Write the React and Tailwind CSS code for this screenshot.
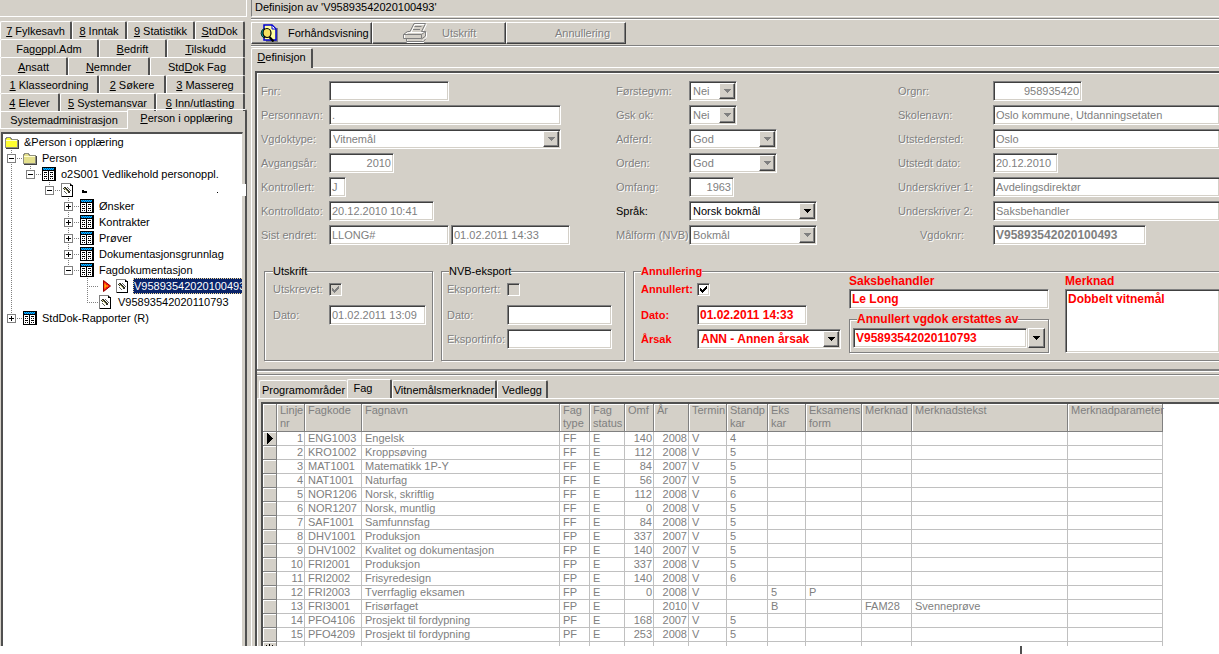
import { useId } from "react";

const SUNKEN =
  "border border-t-[#808080] border-l-[#808080] border-r-white border-b-white shadow-[inset_1px_1px_0_#404040,inset_-1px_-1px_0_#d4d0c8]";
const RAISED =
  "border border-t-white border-l-white border-r-[#404040] border-b-[#404040] shadow-[inset_-1px_-1px_0_#808080]";
const ETCHED = "border border-[#808080] shadow-[1px_1px_0_#fff,inset_1px_1px_0_#fff]";
const DIM = "text-[#808080] [text-shadow:1px_1px_0_#fff]";
const RED = "text-[#ff0000] font-bold text-[12px]";
const RED_SMALL = "text-[#ff0000] font-bold text-[11px]";

function Hot({ text }) {
  const [before, key, after] = text.split("|");
  if (key === undefined) return text;
  return (
    <span className="whitespace-pre">
      {before}
      <span className="underline underline-offset-1">{key}</span>
      {after}
    </span>
  );
}

/* ---------- left side ---------- */

function NavTab({ text, width }) {
  return (
    <button
      type="button"
      className={`h-[18px] rounded-t-xs border-t border-l border-r-2 border-t-white border-l-white border-r-[#505050] text-center leading-4 whitespace-nowrap ${width}`}
    >
      <Hot text={text} />
    </button>
  );
}

const NAV_ROWS = [
  [["|7| Fylkesavh", "w-[72px]"], ["|8| Inntak", "w-[55px]"], ["|9| Statistikk", "w-[68px]"], ["|S|tdDok", "flex-1"]],
  [["Fag|o|ppl.Adm", "w-[99px]"], ["|B|edrift", "w-[68px]"], ["|T|ilskudd", "flex-1"]],
  [["|A|nsatt", "w-[68px]"], ["|N|emnder", "w-[82px]"], ["Std|D|ok Fag", "flex-1"]],
  [["|1| Klasseordning", "w-[99px]"], ["|2| Søkere", "w-[67px]"], ["|3| Massereg", "flex-1"]],
  [["|4| Elever", "w-[60px]"], ["|5| Systemansvar", "w-[96px]"], ["|6| Inn/utlasting", "flex-1"]],
];

function FolderIcon({ open }) {
  return (
    <svg width="16" height="16" viewBox="0 0 16 16" shapeRendering="crispEdges" className="shrink-0">
      <path d="M1 14V4H2V3H7V4H8V5H14V14Z" fill="#909080" />
      <path d="M2 13V5H3V4H6V5H7V6H13V13Z" fill={open ? "#ffff30" : "#e4e08c"} />
      <path d="M2 6.500H13" stroke="#ffffd0" />
      <path d="M2 14.500H15" stroke="#404040" />
      <path d="M14.500 6V14" stroke="#404040" />
    </svg>
  );
}

function FormIcon() {
  return (
    <svg width="16" height="16" viewBox="0 0 16 16" shapeRendering="crispEdges" className="shrink-0">
      <rect x="1" y="1" width="14" height="14" fill="#000" />
      <rect x="2" y="5" width="5" height="9" fill="#fff" />
      <rect x="8" y="5" width="5" height="9" fill="#fff" />
      <rect x="2" y="2" width="11" height="2" fill="#0050c0" />
      <path d="M2 2.500H13" stroke="#00d0ff" strokeDasharray="1 1" />
      <path d="M3 3.500H13" stroke="#00d0ff" strokeDasharray="1 1" />
      <path d="M3 6.500H6M3 8.500H4M5 8.500H6M3 10.500H6M3 12.500H4M5 12.500H6M9 6.500H12M9 8.500H10M11 8.500H12M9 10.500H12M9 12.500H10M11 12.500H12" stroke="#000" />
    </svg>
  );
}

function DocIcon() {
  return (
    <svg width="16" height="16" viewBox="0 0 16 16" shapeRendering="crispEdges" className="shrink-0">
      <path d="M1.500 1.500H10.500L12.500 3.500V14.500H1.500Z" fill="#fff" stroke="#808080" />
      <path d="M10.500 1.500V3.500H12.500V14.500H1.500" fill="none" stroke="#000" />
      <path d="M3 6H4V5H6V6H7V7H8V8H9V9H10V11H8V10H7V9H6V8H4V7H3Z" fill="#303028" />
      <path d="M4 6.500H5M5 7.500H6M6 8.500H7M7 9.500H8" stroke="#d8d890" />
      <path d="M7 5.500H8M8 6.500H9M9 7.500H10M10 8.500H11M4 9.500H5M5 10.500H6M6 11.500H7" stroke="#606060" />
    </svg>
  );
}

function ArrowIcon() {
  return (
    <svg width="12" height="16" viewBox="0 0 12 16" className="mr-px ml-1 shrink-0">
      <path d="M1.500 2.500V13.500L8.500 8Z" fill="#ff1010" stroke="#900000" />
      <path d="M3 5.500V8H6M3 10.500V8" fill="none" stroke="#ffe000" />
    </svg>
  );
}

/* Guide cells: l = trunk line, b = blank, t = tee, c = corner */
function Guide({ kind, box }) {
  return (
    <svg width="19" height="16" viewBox="0 0 19 16" shapeRendering="crispEdges" className="shrink-0">
      {kind !== "b" && (
        <path d={kind === "c" ? "M8.500 0V8" : "M8.500 0V16"} stroke="#808080" strokeDasharray="1 1" />
      )}
      {(kind === "t" || kind === "c") && <path d="M8 8.500H19" stroke="#808080" strokeDasharray="1 1" />}
      {box && (
        <>
          <rect x="4.500" y="4.500" width="8" height="8" fill="#fff" stroke="#808080" />
          <path d={box === "+" ? "M6 8.500H11M8.500 6V11" : "M6 8.500H11"} stroke="#000" />
        </>
      )}
    </svg>
  );
}

const TREE = [
  { guides: "t", box: "-", icon: "folder", text: "Person" },
  { guides: "lc", box: "-", icon: "form", text: "o2S001 Vedlikehold personoppl." },
  { guides: "lbc", box: "-", icon: "doc", masked: true },
  { guides: "lbbt", box: "+", icon: "form", text: "Ønsker" },
  { guides: "lbbt", box: "+", icon: "form", text: "Kontrakter" },
  { guides: "lbbt", box: "+", icon: "form", text: "Prøver" },
  { guides: "lbbt", box: "+", icon: "form", text: "Dokumentasjonsgrunnlag" },
  { guides: "lbbc", box: "-", icon: "form", text: "Fagdokumentasjon" },
  { guides: "lbbbt", icon: "doc", text: "V95893542020100493", selected: true },
  { guides: "lbbbc", icon: "doc", text: "V95893542020110793" },
  { guides: "c", box: "+", icon: "form", text: "StdDok-Rapporter (R)" },
];

function TreeRow({ node }) {
  const cells = node.guides.split("");
  return (
    <li className={`relative flex h-4 items-center ${node.masked ? "" : "overflow-hidden"}`}>
      {cells.map((kind, i) => (
        <Guide key={i} kind={kind} box={i === cells.length - 1 ? node.box : null} />
      ))}
      {node.selected && <ArrowIcon />}
      {node.icon === "folder" && <FolderIcon />}
      {node.icon === "form" && <FormIcon />}
      {node.icon === "doc" && <DocIcon />}
      {node.masked ? (
        <>
          <svg width="140" height="16" viewBox="0 0 140 16" shapeRendering="crispEdges" className="ml-1">
            <path d="M2 8H4V9H7V11H2Z" fill="#000" />
            <path d="M137 10H138V11H137Z" fill="#000" />
          </svg>
          <span className="absolute -right-1 h-3 w-2 bg-white" />
        </>
      ) : node.selected ? (
        <span className="ml-0.5 bg-[#0a246a] px-px leading-4 whitespace-nowrap text-white outline-1 -outline-offset-1 outline-dotted outline-[#f5db95]">
          {node.text}
        </span>
      ) : (
        <span className="ml-1 leading-4 whitespace-nowrap">{node.text}</span>
      )}
    </li>
  );
}

function Sidebar() {
  return (
    <aside className="flex w-[247px] shrink-0 flex-col">
      <div className="h-[17px] shrink-0 border-r border-b border-white" />
      <nav className="mt-1 shrink-0">
        {NAV_ROWS.map((row, i) => (
          <div key={i} className="mr-0.5 flex">
            {row.map(([text, width]) => (
              <NavTab key={text} text={text} width={width} />
            ))}
          </div>
        ))}
        <div className="flex h-[18px] items-end">
          <button type="button" className="h-[18px] w-[127px] border-t border-b border-l border-white text-center leading-4">
            Systemadministrasjon
          </button>
          <button
            type="button"
            className="h-5 flex-1 rounded-t-xs border-t border-r-2 border-l border-t-white border-r-[#505050] border-l-white pb-1 text-center leading-4"
          >
            <Hot text="|P|erson i opplæring" />
          </button>
        </div>
      </nav>
      <div className="flex min-h-0 flex-1 border-r-2 border-[#505050] pt-[3px] pr-0.5 pl-px">
        <ul className="min-w-0 flex-1 border-t-2 border-r border-l-2 border-t-[#505050] border-r-[#d4d0c8] border-l-[#505050] bg-white">
          <li className="flex h-4 items-center pl-px">
            <FolderIcon open />
            <span className="ml-1 leading-4">&amp;Person i opplæring</span>
          </li>
          {TREE.map((node, i) => (
            <TreeRow key={i} node={node} />
          ))}
        </ul>
      </div>
    </aside>
  );
}

/* ---------- form parts ---------- */

function Text({ id, value = "", width, tone = "text-[#808080]", right, open }) {
  return (
    <input
      id={id}
      type="text"
      defaultValue={value}
      className={`h-5 min-w-0 bg-white px-0.5 leading-4 outline-none ${SUNKEN} ${width} ${tone} ${right ? "text-right" : ""} ${open ? "border-r-0" : ""}`}
    />
  );
}

function Select({ id, value, width, tone = "text-[#808080]", dim = true }) {
  return (
    <span className={`relative flex h-5 bg-white p-0.5 ${SUNKEN} ${width}`}>
      <select id={id} className={`w-full appearance-none pl-px leading-[14px] outline-none ${tone}`}>
        <option>{value}</option>
      </select>
      <span className={`pointer-events-none absolute top-px right-px flex h-4 w-4 items-center justify-center bg-[#d4d0c8] ${RAISED}`}>
        <svg width="7" height="4" viewBox="0 0 7 4" shapeRendering="crispEdges">
          <path d="M0 0H7L3.500 4Z" fill={dim ? "#808080" : "#000"} />
        </svg>
      </span>
    </span>
  );
}

function Check({ id, checked, active }) {
  return (
    <span className="relative flex h-[13px] w-[13px]">
      <input
        id={id}
        type="checkbox"
        defaultChecked={checked}
        className={`h-[13px] w-[13px] appearance-none ${SUNKEN} ${active ? "bg-white" : "bg-[#d4d0c8]"}`}
      />
      {checked && (
        <svg width="13" height="13" viewBox="0 0 13 13" shapeRendering="crispEdges" className="pointer-events-none absolute inset-0">
          <path
            d="M3 5H4V6H5V7H6V6H7V5H8V4H9V3H10V6H9V7H8V8H7V9H6V10H5V9H4V8H3Z"
            fill={active ? "#000" : "#808080"}
          />
        </svg>
      )}
    </span>
  );
}

function Field({ label, labelWidth, labelClass = DIM, kind = "text", extra, ...rest }) {
  const id = useId();
  const Part = kind === "select" ? Select : Text;
  return (
    <div className="flex h-5 items-center">
      <label htmlFor={id} className={`shrink-0 leading-4 whitespace-nowrap ${labelWidth} ${labelClass}`}>
        {label}
      </label>
      <Part id={id} {...rest} />
      {extra}
    </div>
  );
}

function CheckField({ label, labelWidth, labelClass = DIM, checked, active }) {
  const id = useId();
  return (
    <div className="flex h-6 items-center">
      <label htmlFor={id} className={`shrink-0 leading-4 whitespace-nowrap ${labelWidth} ${labelClass}`}>
        {label}
      </label>
      <Check id={id} checked={checked} active={active} />
    </div>
  );
}

function FieldColumns() {
  const a = "w-[68px]";
  const b = "w-[73px]";
  const c = "w-[95px]";
  return (
    <div className="grid grid-cols-[355px_282px_minmax(0,1fr)] pt-2 pl-1">
      <div className="flex flex-col gap-1">
        <Field label="Fnr:" labelWidth={a} width="w-[120px]" />
        <Field label="Personnavn:" labelWidth={a} width="w-[232px]" value="." />
        <Field label="Vgdoktype:" labelWidth={a} width="w-[232px]" value="Vitnemål" kind="select" />
        <Field label="Avgangsår:" labelWidth={a} width="w-[65px]" value="2010" right />
        <Field label="Kontrollert:" labelWidth={a} width="w-[17px]" value="J" />
        <Field label="Kontrolldato:" labelWidth={a} width="w-[105px]" value="20.12.2010 10:41" />
        <Field
          label="Sist endret:"
          labelWidth={a}
          width="w-[120px]"
          value="LLONG#"
          extra={
            <input
              type="text"
              aria-label="Tidspunkt"
              defaultValue="01.02.2011 14:33"
              className={`ml-0.5 h-5 w-[119px] bg-white px-0.5 leading-4 text-[#808080] outline-none ${SUNKEN}`}
            />
          }
        />
      </div>
      <div className="flex flex-col gap-1">
        <Field label="Førstegvm:" labelWidth={b} width="w-12" value="Nei" kind="select" />
        <Field label="Gsk ok:" labelWidth={b} width="w-12" value="Nei" kind="select" />
        <Field label="Adferd:" labelWidth={b} width="w-[88px]" value="God" kind="select" />
        <Field label="Orden:" labelWidth={b} width="w-[88px]" value="God" kind="select" />
        <Field label="Omfang:" labelWidth={b} width="w-[45px]" value="1963" right />
        <Field
          label="Språk:"
          labelWidth={b}
          labelClass="text-black"
          width="w-32"
          value="Norsk bokmål"
          kind="select"
          tone="text-black"
          dim={false}
        />
        <Field label="Målform (NVB):" labelWidth={b} width="w-32" value="Bokmål" kind="select" />
      </div>
      <div className="flex flex-col gap-1">
        <Field label="Orgnr:" labelWidth={c} width="w-[89px]" value="958935420" right />
        <Field label="Skolenavn:" labelWidth={c} width="flex-1" value="Oslo kommune, Utdanningsetaten" open />
        <Field label="Utstedersted:" labelWidth={c} width="flex-1" value="Oslo" open />
        <Field label="Utstedt dato:" labelWidth={c} width="w-[65px]" value="20.12.2010" />
        <Field label="Underskriver 1:" labelWidth={c} width="flex-1" value="Avdelingsdirektør" open />
        <Field label="Underskriver 2:" labelWidth={c} width="flex-1" value="Saksbehandler" open />
        <Field
          label="Vgdoknr:"
          labelWidth="w-[95px] pl-[22px]"
          width="w-[153px]"
          value="V95893542020100493"
          tone="text-[#808080] font-bold text-[12px]"
        />
      </div>
    </div>
  );
}

function Groups() {
  const officer = useId();
  const note = useId();
  return (
    <div className="mt-5 flex gap-2 pl-[7px]">
      <fieldset className={`flex h-24 w-[169px] shrink-0 flex-col pl-2 ${ETCHED}`}>
        <legend className="h-3 bg-[#d4d0c8] leading-3">Utskrift</legend>
        <CheckField label="Utskrevet:" labelWidth="w-14" checked />
        <div className="mt-1">
          <Field label="Dato:" labelWidth="w-14" width="w-[97px]" value="01.02.2011 13:09" />
        </div>
      </fieldset>
      <fieldset className={`flex h-24 w-[184px] shrink-0 flex-col pl-[5px] ${ETCHED}`}>
        <legend className="ml-0.5 h-3 bg-[#d4d0c8] leading-3">NVB-eksport</legend>
        <CheckField label="Eksportert:" labelWidth="w-[60px]" />
        <div className="mt-1 flex flex-col gap-1">
          <Field label="Dato:" labelWidth="w-[60px]" width="w-[105px]" />
          <Field label="Eksportinfo:" labelWidth="w-[60px]" width="w-[105px]" />
        </div>
      </fieldset>
      <fieldset className={`h-24 min-w-0 flex-1 border-r-0 pl-[7px] ${ETCHED}`}>
        <legend className={`h-3 bg-[#d4d0c8] leading-3 ${RED_SMALL}`}>Annullering</legend>
        <div className="flex">
          <div className="w-[200px] shrink-0">
            <CheckField label="Annullert:" labelWidth="w-14" labelClass={RED_SMALL} checked active />
            <div className="mt-1 flex flex-col gap-1">
              <Field label="Dato:" labelWidth="w-14" labelClass={RED_SMALL} width="w-[110px]" value="01.02.2011 14:33" tone={RED} />
              <Field
                label="Årsak"
                labelWidth="w-14"
                labelClass={RED_SMALL}
                width="w-36"
                value="ANN - Annen årsak"
                kind="select"
                tone={RED}
                dim={false}
              />
            </div>
          </div>
          <div className="-mt-0.5 ml-2 flex w-[200px] shrink-0 flex-col">
            <label htmlFor={officer} className={`h-[14px] leading-3 ${RED}`}>
              Saksbehandler
            </label>
            <Text id={officer} value="Le Long" width="w-full" tone={RED} />
            <fieldset className={`mt-1 h-10 px-[3px] ${ETCHED}`}>
              <legend className={`ml-1 h-3 bg-[#d4d0c8] leading-3 whitespace-nowrap ${RED}`}>Annullert vgdok erstattes av</legend>
              <div className="mt-[3px] flex">
                <span className="relative flex h-5 w-full">
                  <select
                    aria-label="Annullert vgdok erstattes av"
                    className={`mr-[18px] h-5 w-full appearance-none bg-white pl-0.5 leading-4 outline-none ${SUNKEN} ${RED}`}
                  >
                    <option>V95893542020110793</option>
                  </select>
                  <span className={`pointer-events-none absolute right-0 flex h-5 w-[17px] items-center justify-center bg-[#d4d0c8] ${RAISED}`}>
                    <svg width="7" height="4" viewBox="0 0 7 4" shapeRendering="crispEdges">
                      <path d="M0 0H7L3.500 4Z" fill="#000" />
                    </svg>
                  </span>
                </span>
              </div>
            </fieldset>
          </div>
          <div className="-mt-0.5 ml-4 flex min-w-0 flex-1 flex-col">
            <label htmlFor={note} className={`h-[14px] leading-3 ${RED}`}>
              Merknad
            </label>
            <textarea
              id={note}
              defaultValue="Dobbelt vitnemål"
              className={`h-16 w-full resize-none border-r-0 bg-white px-0.5 pt-px leading-4 outline-none ${SUNKEN} ${RED}`}
            />
          </div>
        </div>
      </fieldset>
    </div>
  );
}

/* ---------- subject grid ---------- */

const COLUMNS = [
  ["Linje nr", "w-[28px]", true],
  ["Fagkode", "w-[57px]"],
  ["Fagnavn", "w-[198px]"],
  ["Fag type", "w-[30px]"],
  ["Fag status", "w-[35px]"],
  ["Omf", "w-[29px]", true],
  ["År", "w-[35px]", true],
  ["Termin", "w-[38px]"],
  ["Standp kar", "w-[41px]"],
  ["Eks kar", "w-[38px]"],
  ["Eksamens form", "w-[56px]"],
  ["Merknad", "w-[50px]"],
  ["Merknadstekst", "w-[156px]"],
  ["Merknadparameter", "w-[95px]"],
];

const ROWS = [
  ["1", "ENG1003", "Engelsk", "FF", "E", "140", "2008", "V", "4"],
  ["2", "KRO1002", "Kroppsøving", "FF", "E", "112", "2008", "V", "5"],
  ["3", "MAT1001", "Matematikk 1P-Y", "FF", "E", "84", "2007", "V", "5"],
  ["4", "NAT1001", "Naturfag", "FF", "E", "56", "2007", "V", "5"],
  ["5", "NOR1206", "Norsk, skriftlig", "FF", "E", "112", "2008", "V", "6"],
  ["6", "NOR1207", "Norsk, muntlig", "FF", "E", "0", "2008", "V", "5"],
  ["7", "SAF1001", "Samfunnsfag", "FF", "E", "84", "2008", "V", "5"],
  ["8", "DHV1001", "Produksjon", "FP", "E", "337", "2007", "V", "5"],
  ["9", "DHV1002", "Kvalitet og dokumentasjon", "FP", "E", "140", "2007", "V", "5"],
  ["10", "FRI2001", "Produksjon", "FP", "E", "337", "2008", "V", "5"],
  ["11", "FRI2002", "Frisyredesign", "FP", "E", "140", "2008", "V", "6"],
  ["12", "FRI2003", "Tverrfaglig eksamen", "FP", "E", "0", "2008", "V", "", "5", "P"],
  ["13", "FRI3001", "Frisørfaget", "FP", "E", "", "2010", "V", "", "B", "", "FAM28", "Svenneprøve"],
  ["14", "PFO4106", "Prosjekt til fordypning", "PF", "E", "168", "2007", "V", "5"],
  ["15", "PFO4209", "Prosjekt til fordypning", "PF", "E", "253", "2008", "V", "5"],
  [],
];

const SELECTOR = "border-r border-b border-[#808080] bg-[#d4d0c8] p-0 shadow-[inset_1px_1px_0_#fff]";

function SubjectGrid() {
  return (
    <table className="w-[900px] table-fixed border-separate border-spacing-0 text-[#808080]">
      <thead>
        <tr className="h-7">
          <th className={`w-[14px] ${SELECTOR}`} />
          {COLUMNS.map(([title, width]) => (
            <th
              key={title}
              className={`border-r border-b border-[#808080] bg-[#d4d0c8] p-0 pl-[3px] text-left align-top leading-[13px] font-normal shadow-[inset_1px_1px_0_#fff] ${width} ${
                title.startsWith("Merknad") ? "whitespace-nowrap" : ""
              }`}
            >
              {title}
            </th>
          ))}
        </tr>
      </thead>
      <tbody>
        {ROWS.map((row, r) => (
          <tr key={r} className="h-[14px]">
            <td className={`h-[14px] ${SELECTOR}`}>
              {r === 0 && (
                <svg width="6" height="11" viewBox="0 0 6 11" shapeRendering="crispEdges" className="mx-auto block">
                  <path d="M0 0L6 5.500L0 11Z" fill="#000" />
                </svg>
              )}
              {r === ROWS.length - 1 && (
                <svg width="9" height="9" viewBox="0 0 9 9" shapeRendering="crispEdges" className="mx-auto block">
                  <path d="M4.500 0V9M0 4.500H9M1 1L8 8M8 1L1 8" stroke="#000" />
                </svg>
              )}
            </td>
            {COLUMNS.map(([title, , right], c) => (
              <td
                key={title}
                className={`border-r border-b border-[#c0c0c0] p-0 leading-[13px] whitespace-nowrap ${
                  right ? "pr-px text-right" : "pl-[3px]"
                }`}
              >
                {row[c]}
              </td>
            ))}
          </tr>
        ))}
      </tbody>
    </table>
  );
}

function GridTabs() {
  const tab = "rounded-t-xs border-t border-l border-t-white border-l-white text-center leading-4 whitespace-nowrap";
  return (
    <div className="flex items-end pl-0.5">
      <button type="button" className={`h-[18px] w-[88px] ${tab}`}>
        Programområder
      </button>
      <button type="button" className={`-mb-px h-5 w-[45px] border-r-2 border-r-[#505050] bg-[#d4d0c8] pr-3 pb-1 ${tab}`}>
        Fag
      </button>
      <button type="button" className={`h-[18px] w-[105px] border-r-2 border-r-[#505050] ${tab}`}>
        Vitnemålsmerknader
      </button>
      <button type="button" className={`h-[18px] w-[51px] border-r-2 border-r-[#505050] ${tab}`}>
        Vedlegg
      </button>
    </div>
  );
}

/* ---------- toolbar ---------- */

function PreviewIcon() {
  return (
    <svg width="20" height="18" viewBox="0 0 20 18" className="shrink-0">
      <path d="M6 4H18V18H6Z" fill="#808080" />
      <path d="M4 1H12L16 5V16H4Z" fill="#ffffa0" stroke="#0000d0" strokeWidth="1.500" />
      <path d="M12 1V5H16Z" fill="#fff" stroke="#0000d0" />
      <path d="M4.500 4.500A5 5 0 0 0 4.500 14Z" fill="#00b8b8" stroke="#000" strokeWidth="0.800" />
      <ellipse cx="7" cy="9" rx="4" ry="4.500" fill="#f4e060" stroke="#000" strokeWidth="1.200" />
      <path d="M9.500 13L13.500 17.500" stroke="#000" strokeWidth="2.200" />
    </svg>
  );
}

function PrinterIcon() {
  return (
    <svg width="25" height="20" viewBox="0 0 25 20" className="shrink-0">
      <g fill="none" stroke="#fff" transform="translate(1 1)">
        <path d="M7 8.500L11 .5H22.500L18.500 8.500M.5 15V10.500L4.500 8.500H22.500V13L18.500 17M3 15.500V18.500H20" />
      </g>
      <g fill="none" stroke="#808080">
        <path d="M7 8.500L11 .5H22.500L18.500 8.500M11.500 3.500H18.500M10 6.500H17" />
        <path d="M4.500 8.500H7M18.500 8.500H22.500L18.500 11.500H.5L4.500 8.500M.5 11.500V15.500H18.500V11.500M22.500 8.500V13L18.500 16M3.500 15.500V18.500H20.500L22.500 16" />
      </g>
    </svg>
  );
}

function Toolbar() {
  const base = `flex h-[22px] items-center whitespace-nowrap ${RAISED}`;
  return (
    <div className="flex">
      <button type="button" className={`w-[121px] pl-2 ${base}`}>
        <PreviewIcon />
        <span className="ml-2">Forhåndsvisning</span>
      </button>
      <button type="button" disabled className={`w-[134px] pl-[30px] ${base}`}>
        <PrinterIcon />
        <span className={`ml-[14px] ${DIM}`}>Utskrift</span>
      </button>
      <button type="button" disabled className={`w-[120px] pl-12 ${base}`}>
        <span className={DIM}>Annullering</span>
      </button>
    </div>
  );
}

export default function App() {
  return (
    <div className="flex h-screen flex-col overflow-hidden bg-white font-['Liberation_Sans',Arial,sans-serif] text-[11px] text-black">
      <div className="flex min-h-0 flex-1 gap-1 overflow-hidden bg-[#d4d0c8]">
        <Sidebar />
        <main className="flex min-w-0 flex-1 flex-col">
          <h1 className="h-[17px] shrink-0 border-b border-l border-b-white border-l-[#808080] pl-[3px] leading-[14px]">
            Definisjon av 'V95893542020100493'
          </h1>
          <div className="mt-px shrink-0 border-t border-b border-t-[#808080] border-b-[#808080] pb-px shadow-[inset_0_1px_0_#fff,0_1px_0_#fff]">
            <div className="pt-[3px]">
              <Toolbar />
            </div>
          </div>
          <div className="mt-0.5 flex h-5 shrink-0 items-stretch">
            <button
              type="button"
              className="w-[62px] rounded-t-xs border-t border-r-2 border-l border-t-white border-r-[#505050] border-l-white pb-1 leading-4"
            >
              <Hot text="|D|efinisjon" />
            </button>
            <div className="flex-1 border-b border-white" />
          </div>
          <div className="flex min-h-0 flex-1 flex-col border-l border-white pt-[3px] pl-[3px]">
            <div className="flex min-h-0 flex-1 flex-col border-t-2 border-l-2 border-[#505050]">
              <section className="shrink-0 border-b-2 border-[#808080] pb-2 shadow-[inset_1px_1px_0_#fff,0_1px_0_#fff]">
                <FieldColumns />
                <Groups />
              </section>
              <section className="mt-[3px] flex min-h-0 flex-1 flex-col border-t border-[#808080] pt-1 shadow-[inset_0_1px_0_#fff]">
                <GridTabs />
                <div className="flex min-h-0 flex-1 flex-col border-t border-l border-white pt-[3px] pl-[3px]">
                  <div className="min-h-0 flex-1 overflow-hidden border-t-2 border-l-2 border-[#505050] bg-white">
                    <SubjectGrid />
                  </div>
                </div>
              </section>
            </div>
          </div>
        </main>
      </div>
      <footer className="flex h-2 shrink-0">
        <span className="ml-[1020px] w-0.5 bg-[#505050]" />
      </footer>
    </div>
  );
}
